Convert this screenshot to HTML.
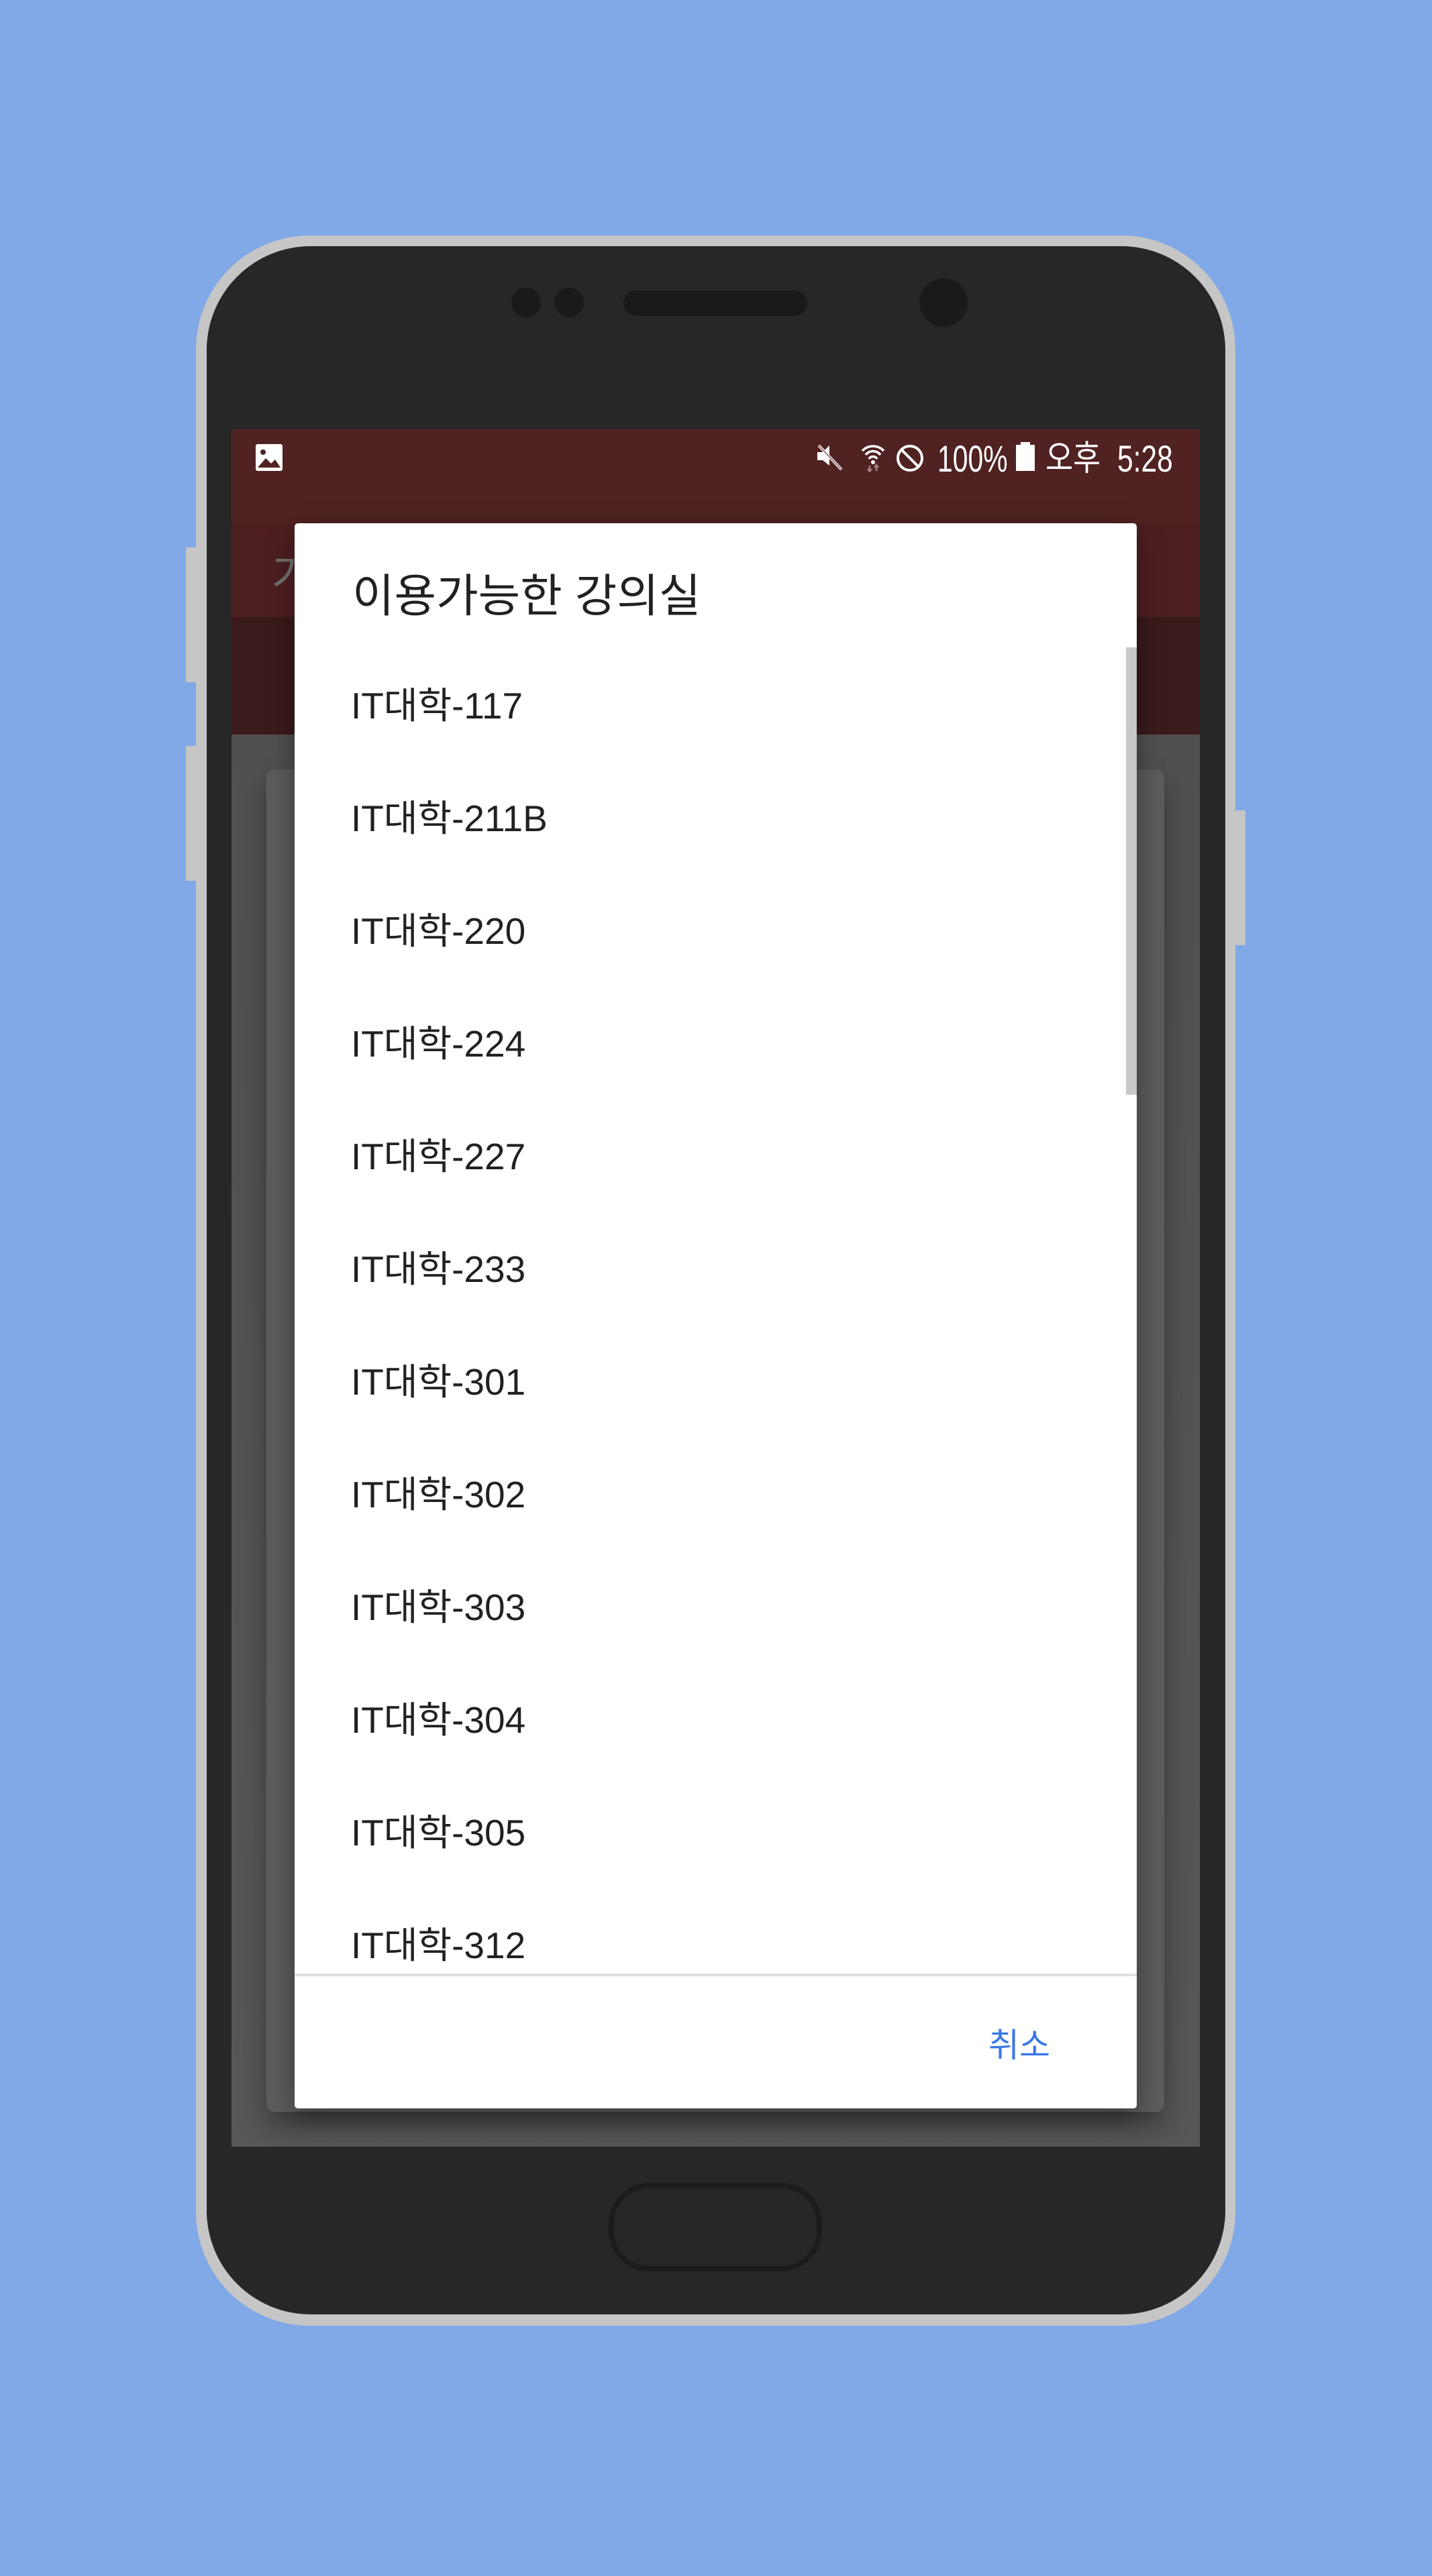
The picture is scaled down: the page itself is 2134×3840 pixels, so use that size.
<!DOCTYPE html>
<html><head><meta charset="utf-8"><style>
html,body{margin:0;padding:0}
body{width:2134px;height:3840px;background:#81a8e7;position:relative;overflow:hidden;font-family:"Liberation Sans","Noto Sans CJK KR",sans-serif}
.a{position:absolute}
.item{position:absolute;left:523px;font-size:55px;color:#212121;white-space:nowrap;transform:scaleX(1.0);transform-origin:left center;line-height:60px}
</style></head><body>
<div class="a" style="left:277px;top:816px;width:20px;height:201px;background:#c6c6c6"></div>
<div class="a" style="left:277px;top:1112px;width:20px;height:201px;background:#c6c6c6"></div>
<div class="a" style="left:1836px;top:1208px;width:20px;height:201px;background:#c6c6c6"></div>
<div class="a" style="left:292px;top:351px;width:1549px;height:3116px;background:#c6c6c6;border-radius:170px"></div>
<div class="a" style="left:308px;top:367px;width:1518px;height:3083px;background:#272727;border-radius:155px"></div>
<div class="a" style="left:762px;top:429px;width:44px;height:44px;border-radius:50%;background:#1a1a1a"></div>
<div class="a" style="left:826px;top:429px;width:44px;height:44px;border-radius:50%;background:#1a1a1a"></div>
<div class="a" style="left:929px;top:433px;width:274px;height:38px;border-radius:19px;background:#1a1a1a"></div>
<div class="a" style="left:1370px;top:415px;width:72px;height:72px;border-radius:50%;background:#1a1a1a"></div>
<div class="a" style="left:345px;top:640px;width:1443px;height:2560px;background:linear-gradient(#4f4f4f,#575757);overflow:hidden">
  <div class="a" style="left:0;top:0;width:1443px;height:140px;background:#512222"></div>
  <div class="a" style="left:0;top:140px;width:1443px;height:140px;background:#4e1f20"></div>
  <div class="a" style="left:0;top:280px;width:1443px;height:175px;background:#3a1a1b"></div>
  <div class="a" style="left:60px;top:167px;font-size:64px;color:#707070">가</div>
  <div class="a" style="left:52px;top:507px;width:1338px;height:2001px;background:#5c5c5c;border-radius:12px;box-shadow:0 20px 40px rgba(0,0,0,.35)"></div>
  <svg class="a" style="left:35px;top:21px" width="42" height="42" viewBox="0 0 42 42"><rect x="1" y="1" width="40" height="40" rx="3" fill="#fff"/><circle cx="12" cy="13" r="4" fill="#512222"/><path d="M4 36 L16 22 L24 30 L30 24 L38 36 Z" fill="#512222"/></svg>
  <svg class="a" style="left:871px;top:22px" width="40" height="40" viewBox="0 0 40 40"><path d="M2 12h8l10-10v30L10 24H2z" fill="#fff"/><path d="M4 2 L38 38" stroke="#fff" stroke-width="4"/><path d="M4 2 L38 38" stroke="#512222" stroke-width="1"/></svg>
  <svg class="a" style="left:936px;top:22px" width="40" height="42" viewBox="0 0 40 42"><path d="M4 10a22 22 0 0 1 32 0M9 16a14 14 0 0 1 22 0M14 22a7 7 0 0 1 12 0" stroke="#fff" stroke-width="3.5" fill="none"/><circle cx="20" cy="27" r="3" fill="#fff"/><path d="M15 32v8M12 37l3 4 3-4M25 40v-8M22 35l3-4 3 4" stroke="#a08080" stroke-width="2.5" fill="none"/></svg>
  <svg class="a" style="left:989px;top:21px" width="44" height="44" viewBox="0 0 44 44"><circle cx="22" cy="22" r="18" stroke="#fff" stroke-width="4" fill="none"/><path d="M10 10 L34 34" stroke="#fff" stroke-width="4"/></svg>
  <div class="a" style="left:1052px;top:14px;font-size:56px;color:#fff;transform:scaleX(0.73);transform-origin:left top;line-height:60px">100%</div>
  <div class="a" style="left:1169px;top:23px;width:28px;height:39px;background:#fff"></div>
  <div class="a" style="left:1176px;top:19px;width:14px;height:5px;background:#fff"></div>
  <div class="a" style="left:1213px;top:14px;font-size:52px;color:#fff;transform:scaleX(0.86);transform-origin:left top;line-height:60px">오후</div>
  <div class="a" style="left:1320px;top:14px;font-size:56px;color:#fff;transform:scaleX(0.76);transform-origin:left top;line-height:60px">5:28</div>
</div>
<div class="a" style="left:439px;top:780px;width:1255px;height:2363px;background:#fff;border-radius:5px;box-shadow:0 10px 40px rgba(0,0,0,.4);overflow:hidden">
  <div class="a" style="left:86px;top:64px;font-size:68px;color:#212121;white-space:nowrap;line-height:90px">이용가능한 강의실</div>
  <div class="a" style="left:1239px;top:185px;width:16px;height:667px;background:#c8c8c8"></div>
  <div class="a" style="left:0;top:2162px;width:1255px;height:4px;background:#e0e0e0"></div>
  <div class="a" style="left:1034px;top:2239px;font-size:50px;color:#3b78e7;line-height:60px">취소</div>
</div>
<div class="a" style="left:439px;top:940px;width:1239px;height:2002px;overflow:hidden">
  <div class="item" style="left:84px;top:82px">IT대학-117</div>
  <div class="item" style="left:84px;top:250px">IT대학-211B</div>
  <div class="item" style="left:84px;top:418px">IT대학-220</div>
  <div class="item" style="left:84px;top:586px">IT대학-224</div>
  <div class="item" style="left:84px;top:754px">IT대학-227</div>
  <div class="item" style="left:84px;top:922px">IT대학-233</div>
  <div class="item" style="left:84px;top:1090px">IT대학-301</div>
  <div class="item" style="left:84px;top:1258px">IT대학-302</div>
  <div class="item" style="left:84px;top:1426px">IT대학-303</div>
  <div class="item" style="left:84px;top:1594px">IT대학-304</div>
  <div class="item" style="left:84px;top:1762px">IT대학-305</div>
  <div class="item" style="left:84px;top:1930px">IT대학-312</div>
</div>
<div class="a" style="left:907px;top:3254px;width:302px;height:116px;border:8px solid #1c1c1c;border-radius:60px;background:#262626"></div>
</body></html>
